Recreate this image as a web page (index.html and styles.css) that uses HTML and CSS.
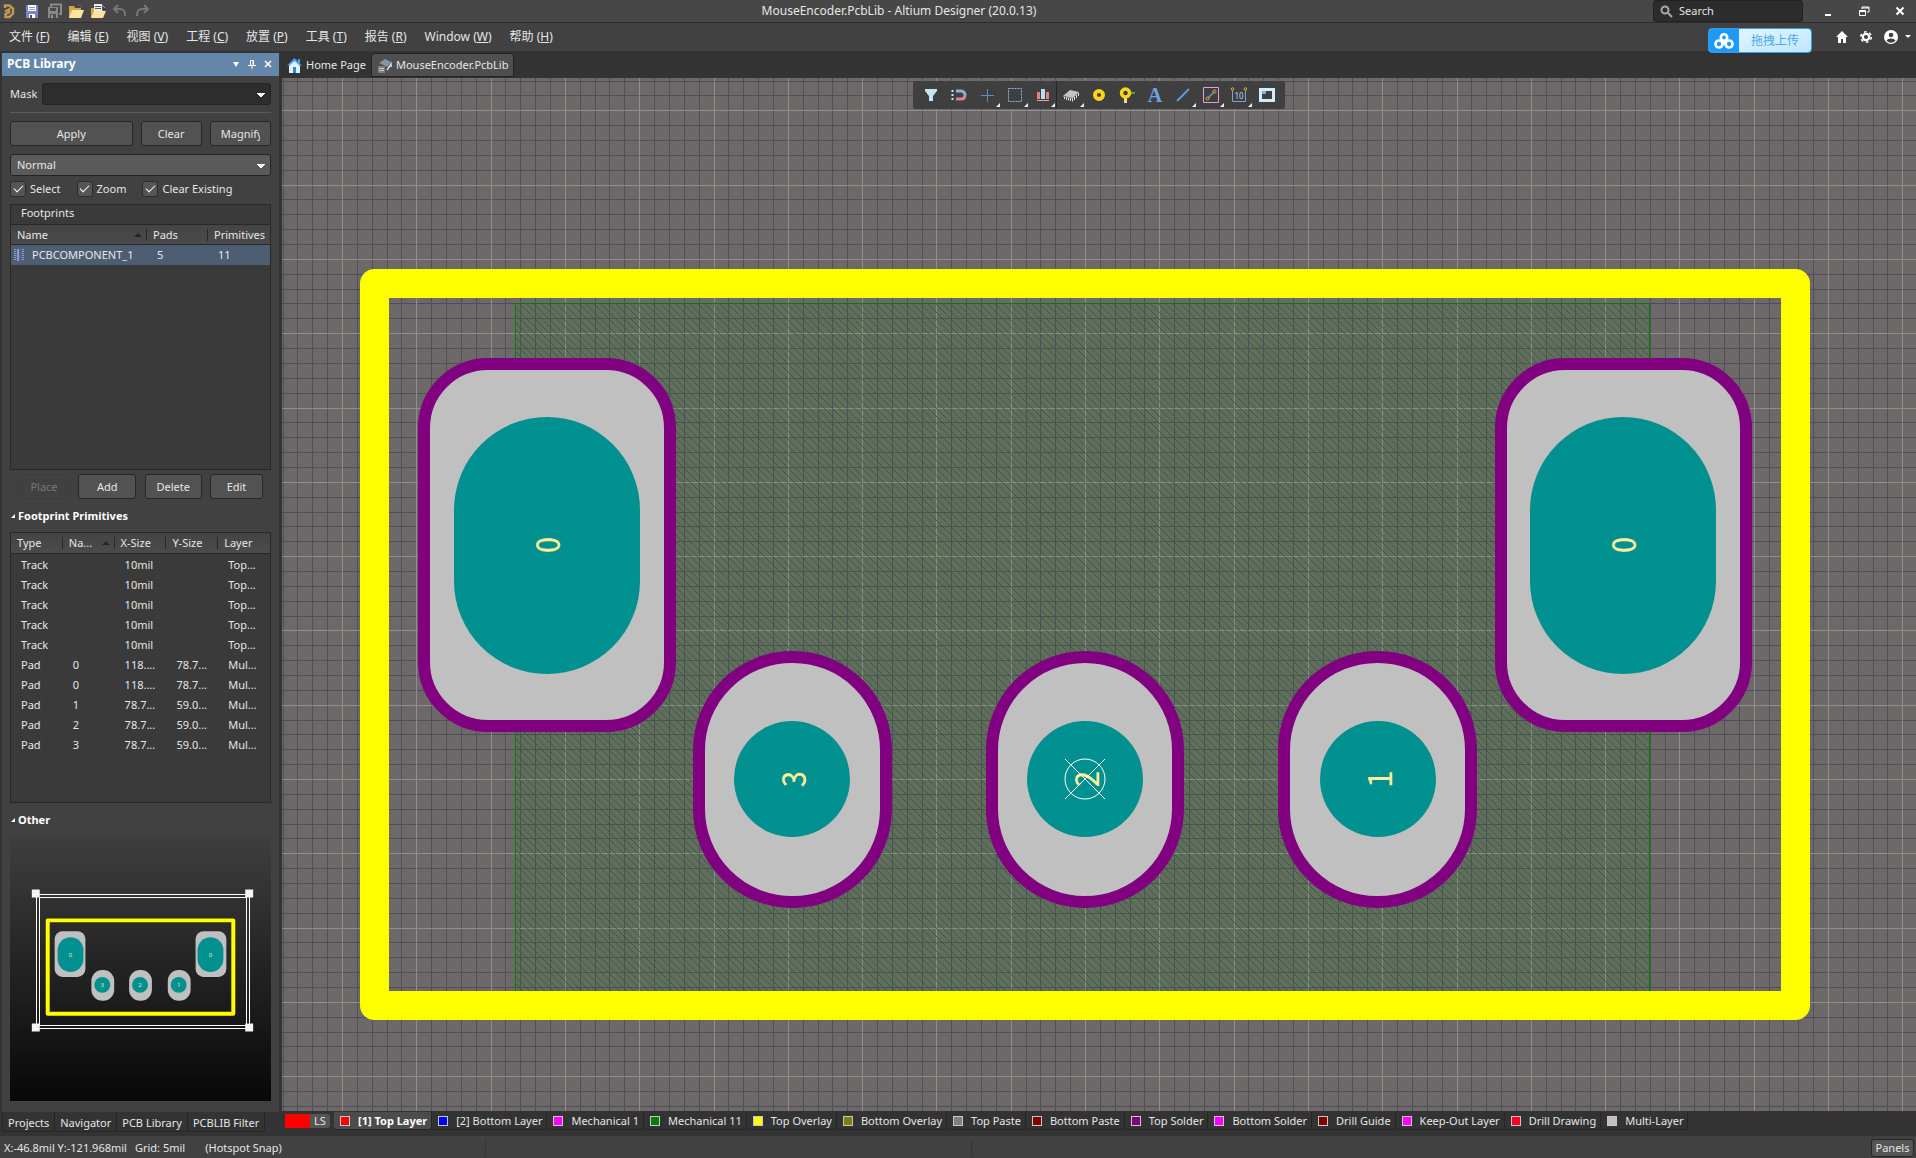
FILE: index.html
```html
<!DOCTYPE html>
<html lang="zh-CN">

<head>
    <meta charset="UTF-8">
    <meta name="viewport" content="width=device-width, initial-scale=1.0">
    <title>MouseEncoder.PcbLib - Altium Designer (20.0.13)</title>
    <link rel="stylesheet" href="styles.css">
</head>

<body>
    <header class="title-bar">
        <div class="quick-tools">
            <button aria-label="Altium"><svg width="16" height="16" viewBox="0 0 16 16" fill="none" stroke="#c09a50" stroke-width="2.400"><path d="M3 5V2.500h4.500L11 5.500v5L7.500 14H3.500v-3l3.500-1.500V6.500L3 8.500"/></svg></button>
            <button aria-label="Save"><svg width="16" height="16" viewBox="0 0 16 16"><path fill="#8083c8" d="M2 2h12v13H2z"/><path fill="#fff" d="M4 2h8v6H4zM5 11h6v4H5z"/><path stroke="#9c9cc8" d="M5 4.500h6M5 6.500h6"/><path fill="#555" d="M6 12h2v3H6z"/></svg></button>
            <button aria-label="Save all"><svg width="16" height="16" viewBox="0 0 16 16"><path fill="none" stroke="#8a8a8a" stroke-width="2" d="M5 4V1.500h10V11h-2"/><path fill="#888" d="M2 4h10v11H2z"/><path fill="#4c4c4c" d="M4 5h6v3H4zM4 11h6v4H4z"/><path fill="#999" d="M5 12h2v3H5z"/></svg></button>
            <button aria-label="Open"><svg width="16" height="16" viewBox="0 0 16 16"><path fill="#d4a54c" d="M1 3h5l1 2h6v9H1z"/><path fill="#ffe3a0" d="M4 7h12l-3 8H1z"/><path fill="none" stroke="#4f6f90" d="M9 3c2-2 4-1 5 2"/></svg></button>
            <button aria-label="Open project"><svg width="16" height="16" viewBox="0 0 16 16"><path fill="#d4a54c" d="M1 5h5l1 2h6v7H1z"/><path fill="#eee" d="M4 1h8v8H4z"/><path stroke="#555" d="M5 3.500h6M5 5.500h6"/><path fill="#ffe3a0" d="M4 8h12l-3 7H1z"/><path fill="none" stroke="#6fa0d0" d="M12 2l3 3"/></svg></button>
            <button aria-label="Undo"><svg width="16" height="16" viewBox="0 0 16 16" fill="none" stroke="#777" stroke-width="2"><path d="M6 2L2 6l4 4M2 6h6c4 0 5 2 5 7"/></svg></button>
            <button aria-label="Redo"><svg width="16" height="16" viewBox="0 0 16 16" fill="none" stroke="#777" stroke-width="2"><path d="M10 2l4 4-4 4M14 6H8c-4 0-5 2-5 7"/></svg></button>
        </div>
        <h1>MouseEncoder.PcbLib - Altium Designer (20.0.13)</h1>
        <div class="title-right">
            <label class="search">
                <svg width="13" height="13" viewBox="0 0 13 13" fill="none" stroke="#aaa" stroke-width="2"><circle cx="5" cy="5" r="3.500"/><path d="M8 8l4 4"/></svg>
                <input type="text" placeholder="Search" aria-label="Search">
            </label>
            <div class="window-buttons">
                <button aria-label="Minimize"><svg width="12" height="12" viewBox="0 0 12 12"><path fill="#fff" d="M3 9h6v2H3z"/></svg></button>
                <button aria-label="Restore"><svg width="12" height="12" viewBox="0 0 12 12" fill="none" stroke="#fff"><path d="M4 4V2h7v5H9M4 3h7M1.500 5.500h6v5h-6zM1.500 6.500h6"/></svg></button>
                <button aria-label="Close"><svg width="12" height="12" viewBox="0 0 12 12" stroke="#fff" stroke-width="2"><path d="M2.500 2.500l7 7M9.500 2.500l-7 7"/></svg></button>
            </div>
        </div>
    </header>

    <nav class="menu-bar">
        <div class="menus">
            <button>文件 (<u>F</u>)</button>
            <button>编辑 (<u>E</u>)</button>
            <button>视图 (<u>V</u>)</button>
            <button>工程 (<u>C</u>)</button>
            <button>放置 (<u>P</u>)</button>
            <button>工具 (<u>T</u>)</button>
            <button>报告 (<u>R</u>)</button>
            <button>Window (<u>W</u>)</button>
            <button>帮助 (<u>H</u>)</button>
        </div>
        <div class="account">
            <button aria-label="Home"><svg width="12" height="12" viewBox="0 0 12 12" fill="#fff"><path d="M6 0l6 6h-2v6H7V8H5v4H2V6H0z"/></svg></button>
            <button aria-label="Settings"><svg width="12" height="12" viewBox="0 0 12 12" fill="none" stroke="#fff"><circle cx="6" cy="6" r="3.200" stroke-width="2.200"/><circle cx="6" cy="6" r="5.200" stroke-width="1.600" stroke-dasharray="2.700 2.745"/></svg></button>
            <button aria-label="User" class="user">
                <svg width="14" height="14" viewBox="0 0 14 14"><circle cx="7" cy="7" r="7" fill="#fff"/><circle cx="7" cy="5" r="2.300" fill="#414141"/><path fill="#414141" d="M2.500 10.500C4 7.800 10 7.800 11.500 10.500 9 13.500 5 13.500 2.500 10.500z"/></svg>
                <svg width="6" height="4" viewBox="0 0 6 4"><path fill="#fff" d="M0 0h6L3 3z"/></svg>
            </button>
        </div>
        <button class="upload">
            <span class="upload-logo"><svg width="20" height="16" viewBox="0 0 20 16" fill="none" stroke="#fff" stroke-width="2.600"><circle cx="10" cy="4.500" r="3.200"/><circle cx="5" cy="11" r="3.500"/><circle cx="15" cy="11" r="3.500"/><path d="M8 8l5 5"/></svg></span>
            <span class="upload-text">拖拽上传</span>
        </button>
    </nav>

    <div class="workspace">
        <aside class="side">
            <section class="panel">
                <div class="panel-header">
                    <h2>PCB Library</h2>
                    <button aria-label="Panel menu"><svg width="8" height="8" viewBox="0 0 8 8"><path fill="#fff" d="M1 2h6L4 7z"/></svg></button>
                    <button aria-label="Pin"><svg width="8" height="9" viewBox="0 0 8 9" fill="none" stroke="#fff"><path d="M2.500 5V.5h3V5M5 .5V5M0 5.500h8M4 6v3"/></svg></button>
                    <button aria-label="Close panel"><svg width="8" height="8" viewBox="0 0 8 8" stroke="#fff" stroke-width="1.600"><path d="M1 1l6 6M7 1L1 7"/></svg></button>
                </div>
                <div class="panel-body">
                    <div class="mask-row">
                        <label for="mask">Mask</label>
                        <select id="mask" class="mask">
                            <option></option>
                        </select>
                    </div>
                    <div class="button-row apply-row">
                        <button>Apply</button>
                        <button>Clear</button>
                        <button><span class="clipped">Magnify</span></button>
                    </div>
                    <select class="mode" aria-label="Selection mode">
                        <option>Normal</option>
                    </select>
                    <div class="checks">
                        <label><input type="checkbox" checked>Select</label>
                        <label><input type="checkbox" checked>Zoom</label>
                        <label><input type="checkbox" checked>Clear Existing</label>
                    </div>
                    <div class="list footprints">
                        <h3>Footprints</h3>
                        <table>
                            <colgroup><col class="col-name"><col class="col-pads"><col></colgroup>
                            <thead>
                                <tr><th class="sorted">Name</th><th>Pads</th><th>Primitives</th></tr>
                            </thead>
                            <tbody>
                                <tr class="selected">
                                    <td><svg width="12" height="12" viewBox="0 0 12 12"><path stroke="#8fa0b8" stroke-dasharray="1 1" stroke-width="2" d="M2 0v12M10 0v12"/><path fill="#56648c" d="M3 0h6v12H3z"/><path fill="#8c9ac4" d="M4 0h2v12H4z"/></svg>PCBCOMPONENT_1</td>
                                    <td>5</td>
                                    <td>11</td>
                                </tr>
                            </tbody>
                        </table>
                    </div>
                    <div class="button-row edit-row">
                        <button disabled>Place</button>
                        <button>Add</button>
                        <button>Delete</button>
                        <button>Edit</button>
                    </div>
                    <h3 class="group-title">Footprint Primitives</h3>
                    <div class="list primitives">
                        <table>
                            <colgroup><col><col><col><col><col></colgroup>
                            <thead>
                                <tr><th>Type</th><th class="sorted">Na...</th><th>X-Size</th><th>Y-Size</th><th>Layer</th></tr>
                            </thead>
                            <tbody>
                                <tr><td>Track</td><td></td><td>10mil</td><td></td><td>Top...</td></tr>
                                <tr><td>Track</td><td></td><td>10mil</td><td></td><td>Top...</td></tr>
                                <tr><td>Track</td><td></td><td>10mil</td><td></td><td>Top...</td></tr>
                                <tr><td>Track</td><td></td><td>10mil</td><td></td><td>Top...</td></tr>
                                <tr><td>Track</td><td></td><td>10mil</td><td></td><td>Top...</td></tr>
                                <tr><td>Pad</td><td>0</td><td>118....</td><td>78.7...</td><td>Mul...</td></tr>
                                <tr><td>Pad</td><td>0</td><td>118....</td><td>78.7...</td><td>Mul...</td></tr>
                                <tr><td>Pad</td><td>1</td><td>78.7...</td><td>59.0...</td><td>Mul...</td></tr>
                                <tr><td>Pad</td><td>2</td><td>78.7...</td><td>59.0...</td><td>Mul...</td></tr>
                                <tr><td>Pad</td><td>3</td><td>78.7...</td><td>59.0...</td><td>Mul...</td></tr>
                            </tbody>
                        </table>
                    </div>
                    <h3 class="group-title">Other</h3>
                    <svg class="preview" viewBox="0 0 261 267">
                        <g fill="none" stroke="#fff" shape-rendering="crispEdges">
                            <path d="M25.500 58.500h215v135h-215zM28.500 61.500h209v129h-209z"/>
                        </g>
                        <path fill="#f4f4f4" d="M21 54h8v8h-8zM236 54h8v8h-8zM21 189h8v8h-8zM236 189h8v8h-8z"/>
                        <rect x="37" y="85" width="187" height="94" fill="none" stroke="#ff0" stroke-width="4" stroke-linejoin="round"/>
                        <g fill="#c0c0c0">
                            <rect x="44" y="96" width="31" height="46" rx="8"/>
                            <rect x="186" y="96" width="31" height="46" rx="8"/>
                            <rect x="81" y="135" width="23" height="31" rx="11"/>
                            <rect x="119" y="135" width="23" height="31" rx="11"/>
                            <rect x="158" y="135" width="23" height="31" rx="11"/>
                        </g>
                        <g fill="#009090">
                            <rect x="47" y="102" width="26" height="35" rx="13"/>
                            <rect x="188" y="102" width="26" height="35" rx="13"/>
                            <circle cx="92" cy="150" r="8"/>
                            <circle cx="130" cy="150" r="8"/>
                            <circle cx="169" cy="150" r="8"/>
                        </g>
                        <g class="preview-number">
                            <text x="60" y="122">0</text>
                            <text x="201" y="122">0</text>
                            <text x="92" y="152">3</text>
                            <text x="130" y="152">2</text>
                            <text x="169" y="152">1</text>
                        </g>
                    </svg>
                </div>
            </section>
            <div class="panel-tabs">
                <button>Projects</button>
                <button>Navigator</button>
                <button>PCB Library</button>
                <button>PCBLIB Filter</button>
            </div>
        </aside>

        <main class="editor">
            <div class="doc-tabs">
                <button><svg width="15" height="15" viewBox="0 0 15 15"><path fill="#4a9df0" d="M7.500 0L15 7.500H0zM11 1h2v4h-2z"/><path fill="#e4f2ff" d="M7.500 3L13 8v7H2V8z"/><path fill="#2f86e0" d="M6 9h3v6H6z"/></svg>Home Page</button>
                <button class="active"><svg width="15" height="15" viewBox="0 0 15 15"><path fill="#8296aa" d="M2 5l6-4 6 3-4 5z"/><path fill="#44525f" d="M2 5l8 4v2L2 7z"/><path stroke="#d5dde5" stroke-width="1.500" fill="none" d="M10 12l4-6v3"/><path fill="#7c7c7c" d="M1 8h7v7H1z"/><path stroke="#ccc" d="M2 10.500h5M2 12.500h5"/></svg>MouseEncoder.PcbLib</button>
            </div>

            <div class="canvas">
                <!-- 1 grid step = 5mil, the origin sits on pad 2 -->
                <svg class="board" viewBox="0 0 1634 1033" preserveAspectRatio="xMidYMid slice">
                    <defs>
                        <clipPath id="body-area"><rect x="233" y="225" width="1135" height="700"/></clipPath>
                    </defs>
                    <rect width="1634" height="1033" fill="#6d6969"/>
                    <g id="grid" shape-rendering="crispEdges"></g>
                    <g clip-path="url(#body-area)">
                        <rect x="233" y="225" width="1135" height="700" fill="#008000" fill-opacity="0.05"/>
                        <g id="hatch" stroke="#0a780a" stroke-opacity="0.8" shape-rendering="crispEdges"></g>
                    </g>
                    <rect x="233.500" y="225.500" width="1134" height="700" fill="none" stroke="#008000"/>
                    <rect x="92.500" y="205.500" width="1421" height="722" fill="none" stroke="#ff0" stroke-width="29" stroke-linejoin="round"/>
                    <g fill="#c0c0c0" stroke="#800080" stroke-width="12">
                        <rect x="142" y="286" width="246" height="362" rx="64"/>
                        <rect x="1219" y="286" width="245" height="362" rx="64"/>
                        <rect x="417" y="579" width="187" height="245" rx="93"/>
                        <rect x="710" y="579" width="186" height="245" rx="93"/>
                        <rect x="1002" y="579" width="187" height="245" rx="93"/>
                    </g>
                    <g fill="#009090">
                        <rect x="172" y="339" width="186" height="257" rx="93"/>
                        <rect x="1248" y="339" width="186" height="257" rx="93"/>
                        <circle cx="510" cy="701" r="58"/>
                        <circle cx="803" cy="701" r="58"/>
                        <circle cx="1096" cy="701" r="58"/>
                    </g>
                    <g class="pad-number">
                        <text transform="translate(278 467) rotate(-90)">0</text>
                        <text transform="translate(1354 467) rotate(-90)">0</text>
                        <text transform="translate(524 701) rotate(-90)">3</text>
                        <text transform="translate(817 701) rotate(-90)">2</text>
                        <text transform="translate(1110 701) rotate(-90)">1</text>
                    </g>
                    <g fill="none" stroke="#fff">
                        <circle cx="803" cy="701" r="20"/>
                        <path d="M783 681l40 40M823 681l-40 40"/>
                    </g>
                </svg>

                <div class="toolbar">
                    <button aria-label="Filter"><svg width="16" height="16" viewBox="0 0 16 16"><path fill="#c8e4f4" d="M2 2h12v2L10 9v5H6V9L2 4z"/></svg></button>
                    <button aria-label="Snap"><svg width="16" height="16" viewBox="0 0 16 16" fill="none" stroke-width="3"><path stroke="#8ab0dc" d="M5 4h5c2.500 0 4 2 4 4"/><path stroke="#e0808c" d="M14 8c0 3-2 4-4 4H5"/><path stroke="#ddd" stroke-width="2" stroke-dasharray="2 2" d="M1.500 3v11"/></svg></button>
                    <button aria-label="Move" class="more"><svg width="16" height="16" viewBox="0 0 16 16" stroke="#5c8cc8"><path d="M8.500 2v13M2 8.500h13"/></svg></button>
                    <button aria-label="Select area" class="more"><svg width="16" height="16" viewBox="0 0 16 16" fill="none" stroke="#8cb4ec"><path stroke-dasharray="2 1" d="M1.500 1.500h13v13h-13z"/></svg></button>
                    <button aria-label="Align" class="more split"><svg width="16" height="16" viewBox="0 0 16 16"><path fill="#e88080" d="M2 5h3v7H2zM11 5h3v7h-3z"/><path fill="#b8dcf4" d="M6 2h4v10H6z"/><path fill="#e8a0a0" d="M2 13h12v1H2z"/></svg></button>
                    <button aria-label="Place component" class="more"><svg width="16" height="16" viewBox="0 0 16 16"><path fill="#c4c4c4" d="M0 9l7-6 9 2-6 6z"/><path fill="#8c8c8c" d="M0 9l10 2v1L0 10z"/><path stroke="#e4e4e4" d="M1.500 10v2M3.500 10.500v2.500M5.500 11v2.500M7.500 11v3M9.500 11.500v3M11.500 10v3M13.500 8v3M15.500 6v3"/></svg></button>
                    <button aria-label="Place pad"><svg width="16" height="16" viewBox="0 0 16 16"><circle cx="8" cy="8" r="4" fill="none" stroke="#fcd41c" stroke-width="4"/></svg></button>
                    <button aria-label="Place via"><svg width="16" height="16" viewBox="0 0 16 16"><path fill="#f4d8a0" d="M5 9h3v7H5z"/><path fill="#48a830" d="M10 5h6v2h-6z"/><circle cx="6.500" cy="6" r="4" fill="none" stroke="#fcd41c" stroke-width="3.500"/></svg></button>
                    <button aria-label="Place string" class="letter">A</button>
                    <button aria-label="Place line" class="more"><svg width="16" height="16" viewBox="0 0 16 16"><path stroke="#5c9ce0" stroke-width="2" d="M2 14L14 2"/></svg></button>
                    <button aria-label="Keepout" class="more"><svg width="16" height="16" viewBox="0 0 16 16" fill="none"><path stroke="#e49ce4" d="M.5.500h15v15H.5z"/><path stroke="#5c9ce0" stroke-width="1.500" d="M5 11l6-6"/><circle cx="11.500" cy="4.500" r="1.500" stroke="#e8b020"/><circle cx="4.500" cy="11.500" r="1.500" stroke="#e8b020"/></svg></button>
                    <button aria-label="Dimension" class="more dimension"><svg width="16" height="16" viewBox="0 0 16 16" fill="none"><path stroke="#78a4d8" d="M1.500 3v11.500h13V3"/><circle cx="1.500" cy="2" r="1.300" stroke="#e8b020"/><circle cx="14.500" cy="2" r="1.300" stroke="#e8b020"/><text x="8" y="12">10</text></svg></button>
                    <button aria-label="Fill"><svg width="16" height="16" viewBox="0 0 16 16"><path fill="#d0ecfc" fill-rule="evenodd" d="M0 1h16v14H0zM3 4v8h10V4z"/><path fill="#80b0d0" d="M3 7h4V4H3z"/></svg></button>
                </div>
            </div>

            <div class="layers">
                <button class="layer-set"><span class="layer-color red"></span><span class="layer-set-name">LS</span></button>
                <button class="layer active"><span class="swatch red"></span>[1] Top Layer</button>
                <button class="layer"><span class="swatch blue"></span>[2] Bottom Layer</button>
                <button class="layer"><span class="swatch magenta"></span>Mechanical 1</button>
                <button class="layer"><span class="swatch green"></span>Mechanical 11</button>
                <button class="layer"><span class="swatch yellow"></span>Top Overlay</button>
                <button class="layer"><span class="swatch olive"></span>Bottom Overlay</button>
                <button class="layer"><span class="swatch gray"></span>Top Paste</button>
                <button class="layer"><span class="swatch maroon"></span>Bottom Paste</button>
                <button class="layer"><span class="swatch purple"></span>Top Solder</button>
                <button class="layer"><span class="swatch magenta"></span>Bottom Solder</button>
                <button class="layer"><span class="swatch maroon"></span>Drill Guide</button>
                <button class="layer"><span class="swatch magenta"></span>Keep-Out Layer</button>
                <button class="layer"><span class="swatch crimson"></span>Drill Drawing</button>
                <button class="layer"><span class="swatch silver"></span>Multi-Layer</button>
            </div>
        </main>
    </div>

    <footer class="status-bar">
        <div class="status-cell status-position">
            <span>X:-46.8mil Y:-121.968mil</span>
            <span>Grid: 5mil</span>
            <span class="snap">(Hotspot Snap)</span>
        </div>
        <div class="status-cell"></div>
        <div class="status-last"></div>
        <button class="panels">Panels</button>
    </footer>

    <script src="board.js"></script>
</body>

</html>
```
FILE: board.js
```js
const SVG_NS = 'http://www.w3.org/2000/svg';
const STEP = 14.86;
const ORIGIN = { x: 803, y: 701 };

function addLine(parent, x1, y1, x2, y2, stroke) {
    const line = document.createElementNS(SVG_NS, 'line');
    line.setAttribute('x1', x1);
    line.setAttribute('y1', y1);
    line.setAttribute('x2', x2);
    line.setAttribute('y2', y2);
    if (stroke) line.setAttribute('stroke', stroke);
    parent.appendChild(line);
}

// Every fifth line is a coarse one, drawn over the fine lines
function drawGrid() {
    const grid = document.getElementById('grid');
    [false, true].forEach(major => {
        const color = major ? '#918d8e' : '#514d5c';
        for (let i = -60; i <= 60; i++) {
            if ((i % 5 === 0) !== major) continue;
            const x = Math.round(ORIGIN.x + i * STEP) + 0.5;
            const y = Math.round(ORIGIN.y + i * STEP) + 0.5;
            if (x > 0 && x < 1634) addLine(grid, x, 0, x, 1033, color);
            if (y > 0 && y < 1033) addLine(grid, 0, y, 1634, y, color);
        }
    });
}

function drawHatch() {
    const hatch = document.getElementById('hatch');
    for (let x = 244 - 98 * STEP / 2; x < 1368; x += STEP / 2) {
        addLine(hatch, Math.round(x), 225, Math.round(x) + 700, 925);
    }
}

drawGrid();
drawHatch();
```
FILE: styles.css
```css
* {
    box-sizing: border-box;
}

body {
    margin: 0;
    min-height: 100vh;
    display: flex;
    flex-direction: column;
    background: #333333;
    color: #e6e6e6;
    font-family: 'Noto Sans', 'Noto Sans CJK SC', sans-serif;
    font-size: 11px;
    line-height: 16px;
}

button,
input,
select {
    font: inherit;
    color: inherit;
}

button {
    padding: 0;
    border: 0;
    background: none;
}

svg {
    display: block;
    flex-shrink: 0;
}

h1,
h2,
h3 {
    margin: 0;
    font-size: 11px;
}

/* Title bar and menus */
.title-bar {
    display: grid;
    grid-template-columns: 1fr auto 1fr;
    align-items: center;
    height: 22px;
    padding: 0 10px 0 2px;
    background: #474747;
}

.title-bar h1 {
    font-size: 12px;
    font-weight: 400;
    padding-right: 110px;
}

.quick-tools {
    display: flex;
    gap: 6px;
}

.title-right {
    display: flex;
    justify-content: flex-end;
    align-items: center;
    gap: 19px;
}

.search {
    display: flex;
    align-items: center;
    gap: 6px;
    width: 150px;
    height: 22px;
    padding: 0 6px;
    background: #2c2c2c;
    border: 1px solid #222222;
    border-radius: 3px;
}

.search input {
    min-width: 0;
    padding: 0;
    border: 0;
    background: none;
}

.search input::placeholder {
    color: #e6e6e6;
}

.window-buttons {
    display: flex;
    gap: 24px;
}

.menu-bar {
    position: relative;
    display: flex;
    justify-content: space-between;
    align-items: center;
    height: 29px;
    padding: 0 5px 0 9px;
    border-top: 1px solid #2c2c2c;
    background: #414141;
}

.menus {
    display: flex;
    gap: 18px;
    font-size: 12px;
}

.account {
    display: flex;
    align-items: center;
    gap: 12px;
}

.user {
    display: flex;
    align-items: center;
    gap: 7px;
}

.upload {
    position: absolute;
    right: 104px;
    top: 5px;
    display: flex;
    width: 104px;
    height: 25px;
    border: 1px solid #2b9ff0;
    border-radius: 4px;
    overflow: hidden;
    background: linear-gradient(to bottom right, #e8f8ff, #bfe6ff);
}

.upload-logo {
    display: grid;
    place-items: center;
    width: 30px;
    height: 23px;
    background: #1e9bfa;
}

.upload-text {
    flex: 1;
    font-size: 12px;
    line-height: 23px;
    color: #4aa8ee;
}

/* Workspace */
.workspace {
    flex: 1;
    display: flex;
    padding-top: 2px;
}

.side {
    display: flex;
    flex-direction: column;
    width: 282px;
    flex-shrink: 0;
}

.panel {
    flex: 1;
    display: flex;
    flex-direction: column;
    margin: 0 3px 0 2px;
    background: #414141;
}

.panel-header {
    display: flex;
    align-items: center;
    gap: 8px;
    height: 23px;
    padding: 0 7px 1px 5px;
    background: #6486a8;
    color: #ffffff;
}

.panel-header h2 {
    flex: 1;
    font-size: 12px;
}

.panel-body {
    flex: 1;
    display: flex;
    flex-direction: column;
    padding: 7px 8px 11px;
}

.mask-row {
    display: flex;
    align-items: center;
    gap: 5px;
    height: 30px;
    padding-bottom: 8px;
    border-bottom: 1px solid #5a5a5a;
}

.mask,
.mode {
    appearance: none;
    flex: 1;
    height: 22px;
    padding: 0 6px;
    border: 1px solid #242424;
    border-radius: 3px;
    background: #2d2d2d;
    background-image: linear-gradient(#fff, #fff), linear-gradient(#fff, #fff), linear-gradient(#fff, #fff), linear-gradient(#fff, #fff);
    background-size: 8px 1px, 6px 1px, 4px 1px, 2px 1px;
    background-position: right 5px top 9px, right 6px top 10px, right 7px top 11px, right 8px top 12px;
    background-repeat: no-repeat;
}

.mode {
    flex: none;
    margin-top: 8px;
    background-color: #5a5a5a;
}

.button-row {
    display: grid;
}

.button-row button {
    height: 25px;
    border: 1px solid #262626;
    border-radius: 3px;
    background: #525252;
    white-space: nowrap;
}

.apply-row {
    grid-template-columns: 2fr 1fr 1fr;
    gap: 8px;
    margin-top: 8px;
}

.apply-row button {
    min-width: 0;
    padding: 0 10px;
}

.clipped {
    display: block;
    overflow: hidden;
}

.checks {
    display: flex;
    gap: 16px;
    padding: 5px 0 7px;
}

.checks label {
    display: flex;
    align-items: center;
    gap: 4px;
}

.checks input {
    appearance: none;
    width: 16px;
    height: 16px;
    margin: 0;
    border: 1px solid #2c2c2c;
    border-radius: 3px;
    background: #555555;
    display: grid;
    place-items: center;
}

.checks input:checked::before {
    content: "";
    width: 8px;
    height: 4px;
    margin-bottom: 3px;
    border-left: 1px solid #ffffff;
    border-bottom: 1px solid #ffffff;
    transform: rotate(-45deg);
}

/* Lists */
.list {
    border: 1px solid #282828;
    background: #3a3a3a;
}

.list h3 {
    height: 19px;
    padding-left: 10px;
    line-height: 16px;
    font-weight: 400;
}

.list table {
    width: 100%;
    table-layout: fixed;
    border-collapse: collapse;
}

.list tr {
    height: 20px;
}

.list th,
.list td {
    padding: 0;
    font-weight: 400;
    text-align: left;
    white-space: nowrap;
}

.list thead {
    background: linear-gradient(#444444, #4b4b4b);
}

.list thead tr {
    border-top: 1px solid #282828;
    border-bottom: 1px solid #282828;
}

.list th {
    padding-left: 6px;
    background: linear-gradient(#282828, #282828) right center / 1px 12px no-repeat;
}

.list th:last-child {
    background: none;
}

.list td {
    padding-left: 10px;
}

.list td svg {
    display: inline-block;
    vertical-align: -2px;
    margin: 0 7px 0 -8px;
}

.sorted::after {
    content: "";
    float: right;
    margin: 6px 5px 0 0;
    border: 4px solid transparent;
    border-top: 0;
    border-bottom-color: #262626;
}

.footprints {
    height: 266px;
}

.col-name {
    width: 136px;
}

.col-pads {
    width: 61px;
}

.selected {
    background: #4e5e72;
}

.edit-row {
    grid-template-columns: 52px 58px 57px 53px;
    justify-content: space-between;
    padding: 4px 8px 0;
}

.edit-row button:disabled {
    border-color: #3c3c3c;
    background: none;
    color: #777777;
}

.group-title {
    display: flex;
    align-items: center;
    gap: 3px;
    height: 33px;
    color: #ffffff;
}

.group-title::before {
    content: "";
    border: 2px solid transparent;
    border-right-color: #ffffff;
    border-bottom-color: #ffffff;
    margin-left: 1px;
}

.primitives {
    height: 271px;
}

.primitives thead tr {
    border-top: 0;
}

.primitives tbody::before {
    content: "";
    display: block;
    height: 1px;
}

.preview {
    flex: 1 1 0;
    width: 100%;
    height: 0;
    min-height: 0;
    background: linear-gradient(#3e3e3e, #080808);
}

.preview-number {
    fill: #ffe9a0;
    font-size: 6px;
    text-anchor: middle;
}

.panel-tabs {
    display: flex;
    height: 24px;
    padding: 0 2px 4px;
}

.panel-tabs button {
    padding: 2px 5px 0;
    border: 1px solid #262626;
    border-width: 0 1px 1px 0;
    border-radius: 0 0 3px 3px;
}

.panel-tabs button:first-child {
    border-left-width: 1px;
}

/* Editor */
.editor {
    flex: 1;
    min-width: 0;
    display: flex;
    flex-direction: column;
}

.doc-tabs {
    display: flex;
    height: 25px;
    padding-bottom: 1px;
}

.doc-tabs button {
    display: flex;
    align-items: center;
    gap: 4px;
    padding: 0 5px;
}

.doc-tabs .active {
    border: 1px solid #222222;
    border-radius: 3px 3px 0 0;
    background: #4f4f4f;
}

.canvas {
    position: relative;
    flex: 1 1 0;
    min-height: 0;
    overflow: hidden;
}

.board {
    width: 100%;
    height: 100%;
}

.pad-number {
    fill: #ffee99;
    font-family: 'Noto Sans CJK SC', 'Liberation Sans', sans-serif;
    font-feature-settings: "hwid";
    font-size: 34px;
    text-anchor: middle;
}

.toolbar {
    position: absolute;
    top: 3px;
    left: 50%;
    transform: translateX(-50%);
    display: flex;
    height: 28px;
    padding: 0 4px;
    border-radius: 2px;
    background: #3f3f3f;
}

.toolbar button {
    position: relative;
    display: grid;
    place-items: center;
    width: 28px;
}

.toolbar .more::after {
    content: "";
    position: absolute;
    right: 1px;
    bottom: 2px;
    border: 2px solid #eeeeee;
    border-top-color: transparent;
    border-left-color: transparent;
}

.toolbar .split {
    border-right: 1px solid #262626;
}

.toolbar .letter {
    font-family: 'Liberation Serif', serif;
    font-size: 20px;
    font-weight: 700;
    color: #6ca4e4;
}

.dimension text {
    fill: #b8d4f0;
    font-size: 8px;
    text-anchor: middle;
}

.layers {
    display: flex;
    height: 25px;
    padding: 1px 3px 6px;
}

.layer-set {
    display: flex;
    align-items: center;
    margin-right: 4px;
}

.layer-color {
    width: 25px;
    height: 14px;
}

.layer-set-name {
    width: 20px;
    height: 14px;
    line-height: 14px;
    border-radius: 0 3px 3px 0;
    background: #555555;
}

.layer {
    display: flex;
    align-items: center;
    gap: 8px;
    padding: 0 4px 0 6px;
    border: 1px solid #262626;
    border-width: 0 1px 1px 0;
    border-radius: 0 0 3px 3px;
    white-space: nowrap;
}

.layer.active {
    background: #4c4c4c;
    color: #ffffff;
    font-weight: 700;
}

.swatch {
    width: 10px;
    height: 10px;
    border: 1px solid #c8c8c8;
}

.red {
    background: #ff0000;
}

.blue {
    background: #0000ff;
}

.magenta {
    background: #ff00ff;
}

.green {
    background: #008000;
}

.yellow {
    background: #ffff00;
}

.olive {
    background: #808000;
}

.gray {
    background: #808080;
}

.maroon {
    background: #800000;
}

.purple {
    background: #800080;
}

.crimson {
    background: #ff0028;
}

.silver {
    background: #c0c0c0;
}

/* Status bar */
.status-bar {
    display: flex;
    align-items: center;
    height: 22px;
    padding: 2px 2px 0 4px;
    background: #414141;
}

.status-cell {
    width: 486px;
    height: 17px;
    border-right: 1px solid #333333;
}

.status-position {
    display: flex;
    gap: 8px;
    width: 482px;
}

.snap {
    margin-left: 12px;
}

.status-last {
    flex: 1;
}

.panels {
    width: 43px;
    height: 18px;
    border: 1px solid #262626;
    border-radius: 3px;
    background: #555555;
}
```
